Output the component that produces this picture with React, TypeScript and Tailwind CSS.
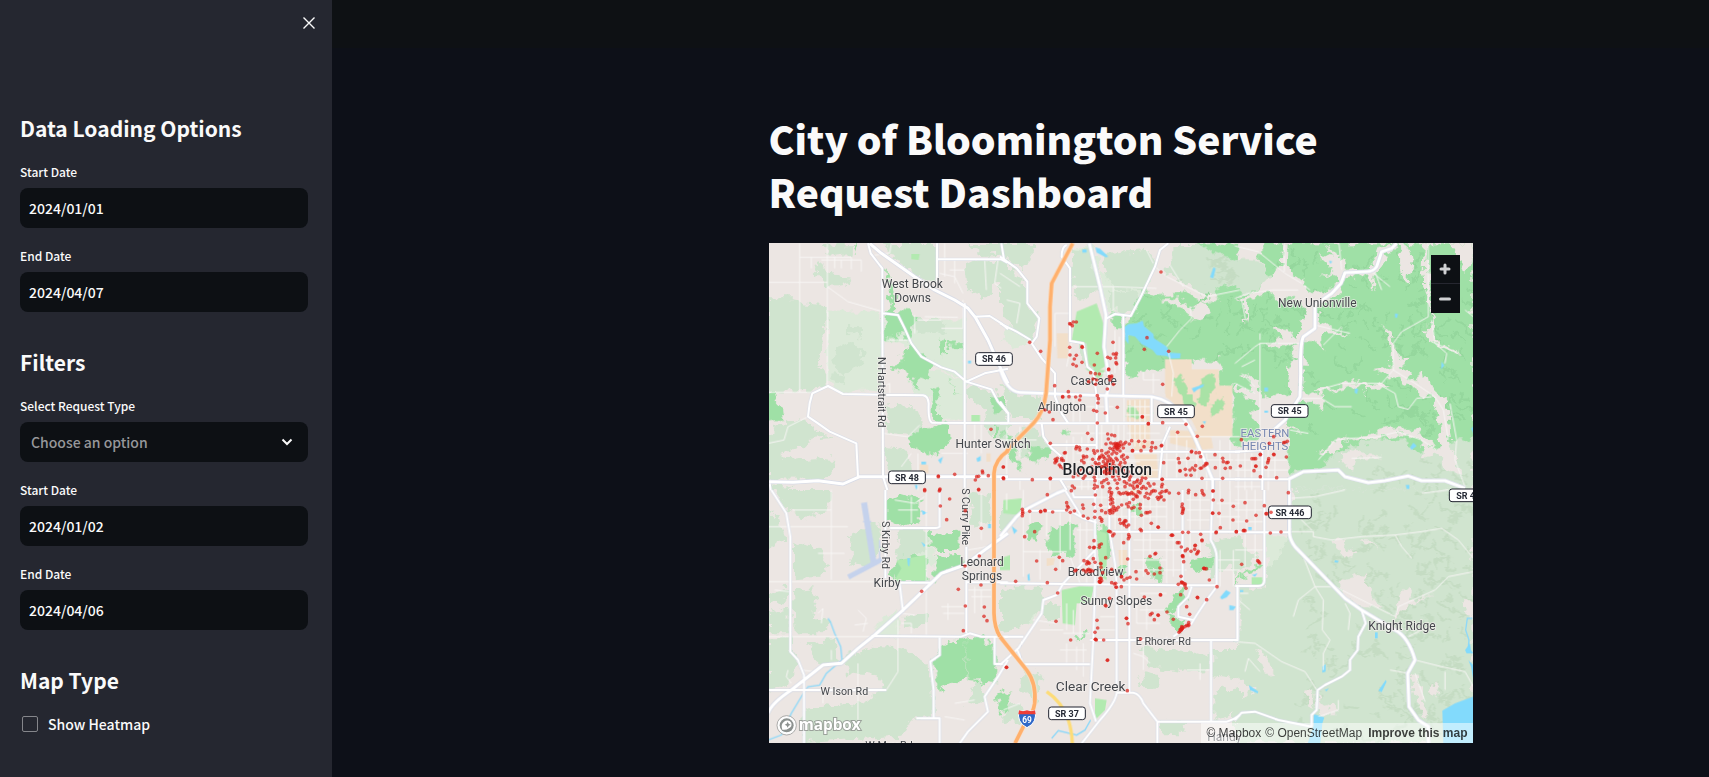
import { useId, useState } from "react";

/* ---------- map data: six tiles, each path is local to its tile ---------- */

type Tile = "a" | "b" | "c" | "d" | "e" | "f";
type Layer = Partial<Record<Tile, string>>;

const ORIGIN: Record<Tile, [number, number]> = {
  a: [-3, -9],
  b: [693, -9],
  c: [1398, -9],
  d: [-3, 741],
  e: [693, 741],
  f: [1398, 741],
};

const TILES = Object.keys(ORIGIN) as Tile[];

const pale: Layer = {
  a: "M180 215H343V450L225 458 180 430ZM345 240H590V420L510 380 450 340 400 300H345ZM420 400 520 390 590 430V540H500L490 470 440 460Z",
  b: "M230 20 280 15 300 130 240 170 215 120ZM300 100 370 90 460 110 400 220 320 215ZM20 260 90 300 60 330 0 300ZM380 490 440 480 450 545 385 545Z",
  c: "M195 410 250 420 250 465 200 470Z",
  d: "M390 180 480 120 500 230 400 200ZM330 390 390 360 390 440 320 440Z",
  e: "M0 300 90 290 120 330 100 400 0 380Z",
  f: "M90 140 160 130 230 230 190 300 140 280 100 220Z",
};

const forest: Layer = {
  a: "M0 172H82L95 190 178 195V262L150 290 160 330 148 380 178 395V435L125 452 60 455 0 452ZM150 15 255 12 250 45 200 50ZM345 12H505V130L460 110 420 85 390 75ZM130 75 160 70 175 100 250 110 235 130 180 140ZM590 75 620 60 720 62V120L680 128 650 180 600 150ZM600 12H720V40L640 45ZM205 320 250 300 290 340 282 372 222 400 192 372ZM240 260 285 262 285 290 240 285ZM0 590 60 540 120 560 130 610 40 640 60 660 140 655 205 660 160 720 0 718ZM20 560 100 535 160 580 200 590 100 600ZM350 500 430 495 452 525 470 560 430 590 360 580ZM600 440 680 450 720 530V600L660 580 650 500 600 480ZM350 620 420 630 430 700 360 690ZM420 230 520 240 540 280 450 285ZM0 730 80 735 60 750H0ZM200 400 230 405 225 435 195 425Z",
  b: "M0 12H100L90 60 60 90 0 40ZM0 60 80 130 85 190 115 240 90 300 40 270 0 200ZM220 20 270 30 300 150 230 190 212 100ZM300 40 440 30 470 70 430 150 340 150ZM520 15H720V150L620 170 560 130 500 100 520 50ZM330 160 390 150 430 170 390 220 330 210ZM0 430 40 460 120 470 130 540 30 540ZM230 240 310 250 320 370 270 390 230 330ZM60 560 110 560 150 640 130 660 60 640 40 600Z",
  c: "M0 55 70 60 110 110 60 150 0 165ZM160 700 240 680 300 640 370 600 500 590 600 625 640 610 715 590V750H160ZM640 505 670 495V580L645 600Z",
  d: "M20 0H190L180 60 110 85 60 60ZM0 60 40 90 55 150 0 180ZM75 160 140 170 180 220 160 260 75 265ZM240 140 330 100 350 180 300 230 250 220ZM20 300 60 290 60 330 0 340V310ZM75 300 130 295 150 330 130 370 190 400 160 430 80 430ZM0 370 65 350 65 430 0 430ZM0 445 66 445V480L90 510 60 590 0 600ZM110 460 200 450 210 520 150 520ZM225 500 310 470 400 475 485 520 495 680 430 690 400 740 110 755 105 660 180 640 280 650 340 600 340 560 240 550ZM620 560 660 610 640 650 600 640ZM600 10 670 20 670 100 610 110ZM410 380 470 370 475 400 420 420ZM400 120 475 110 480 180 380 220Z",
  e: "M0 40 60 30 55 80 0 130ZM0 290 130 290 125 350 60 420 0 430ZM70 530 130 560 110 640 60 600ZM420 470 560 480 630 500V540L540 545 440 530ZM640 480H720V560L640 550ZM430 550 480 560 470 600 420 590ZM640 610 720 590V670L640 690ZM10 660 60 640 70 690 10 700ZM480 690 560 700 540 730 480 730ZM120 350 180 340 180 400 130 390ZM620 150 720 140V210L640 260Z",
  f: "M180 0H715V760H0V640L60 600 0 560V460H10V290H85L100 230 163 150ZM0 150 70 200 0 260Z",
};

const woods: Layer = {
  a: "M345 80 365 115 385 170 380 210 430 215 450 240 420 270 430 300 400 285 350 300 350 222 375 200ZM375 370 415 345 430 308 470 350 500 372 480 410 455 420 440 442 415 400 370 388ZM420 600 455 560 540 555 542 610 500 642 430 625ZM0 455 20 458 30 500 50 535 0 542ZM490 440 515 450 512 552 495 535 500 480ZM672 468 700 470 715 515 675 520ZM510 300 540 300 540 340 512 345ZM545 305 585 305 582 328 548 325ZM490 570 530 550 530 600ZM540 410 575 460 560 445ZM675 555H688V595H675ZM258 10 275 10 265 40Z",
  b: "M430 148 480 165 560 158 610 190 640 180 720 178V630L698 600V440H660V360H575L540 388 495 388 400 425 376 390V250L400 215ZM585 12H720V60L660 40ZM330 215 365 225 365 265 345 265ZM80 630 145 620 150 640 110 670ZM520 400 560 430 580 470 550 500 510 440ZM600 440 640 400 650 450 610 500 580 520ZM10 570 40 600 50 650 70 700 30 650ZM185 560 210 570 205 590 180 580ZM640 150 720 125V180L660 180Z",
  c: "M85 10H715V590L640 612 560 640 500 592 370 608 300 640 240 690 162 700V560L75 600 0 600V170L60 150 110 110 75 60Z",
  d: "M358 30 400 12 460 30 450 90 380 112 358 90ZM380 210 440 195 475 205V272L385 272ZM360 250 385 230 380 272ZM500 200 580 190 590 225 530 240 495 270ZM475 130 570 125 575 180 500 180ZM595 435 640 440 690 500 685 580 600 570ZM490 510 540 460 595 440 597 565 515 605 500 560ZM685 615 720 605V665L690 655Z",
  e: "M85 100 130 110 110 150 80 140ZM140 120 225 100 225 200 150 195 140 150ZM290 100 325 130 330 210 300 200ZM390 45 420 45 420 80 390 75ZM435 200 480 205 480 240 450 240ZM455 240 490 235 485 275 455 270ZM580 215 640 200 645 230 590 250 570 235ZM520 310 550 285 555 320 520 370 500 360ZM505 370 545 385 540 430 515 410ZM0 615 35 600 30 660 0 665ZM230 430 262 430 262 440 230 442ZM350 220 380 225 375 255 350 250Z",
  f: "M0 275 40 240 85 220 70 240 30 255 0 285Z",
};

const parks: Layer = {
  a: "M430 42 455 42 452 60 430 58ZM610 525H636V545H610Z",
  b: "M230 215 290 190 310 250 315 380 290 395 265 370 260 310 215 300ZM255 385 315 390 300 420Z",
  d: "M385 212 472 195V270L380 270 400 235Z",
  e: "M185 300 240 288 282 290 270 340 230 340 225 405 188 400ZM10 30 65 25 60 75 10 70ZM0 205 30 195 30 240 0 240ZM285 625 320 630 315 660 285 690ZM290 120 320 130 320 270 300 260Z",
  f: "M50 262H82V285H50Z",
};

const sand: Layer = {
  a: "M455 672 480 675 482 700 455 695ZM655 640H668V665H655Z",
  b: "M170 280 205 280 205 355 172 355ZM495 358H575V388H657V437H697V590H600L575 540 510 480 495 470ZM380 480 450 475 450 620 405 635 380 540ZM400 640 470 640 475 715 420 712ZM510 570 630 575 640 625 600 630 510 610Z",
  e: "M355 180 382 180 382 225 358 225ZM140 205 165 205 160 225 140 228ZM375 0 420 0 400 15Z",
};

const clearings: Layer = {
  b: "M480 180 530 175 570 205 620 190 640 210 590 240 560 230 540 200ZM395 425 430 390 488 395 490 470H400Z",
  c: "M110 105 140 80 145 10 158 10 155 90 200 120 205 100 205 150 240 165 285 150 310 130 300 100 245 110 300 90 250 45 300 50 265 15 315 40 330 90 410 85 430 25 485 10 460 40 430 90 415 110 420 150 400 110 335 110 320 150 300 170 250 190 245 240 290 265 345 280 270 280 255 300 275 335 230 300 210 300 205 400 200 450 270 470 280 490 260 505 240 480 195 480 160 540 160 560 210 580 165 570V620H75V540L40 520 75 500 35 470 0 440V430L60 460 20 400 70 430 75 470 160 460 165 400 155 380 185 360 160 340 185 310 120 320 90 305 145 300 110 260 150 270 190 300 210 210 190 180 140 180 105 160 40 180 35 250 25 180 0 180 60 155ZM490 10 520 20 530 60 515 140 500 80ZM570 10 583 10 575 80 590 200 600 300 660 330 680 345 620 320 580 300 575 260 590 240 565 100ZM465 310 435 250 475 290 480 340 520 360 500 380 540 420 570 395 575 430 630 480 640 520 650 620 680 700 640 690 600 640 560 660 570 625 540 590 480 580 430 600 330 600 450 570 540 570 620 630 610 520 590 480 550 450 480 410 410 395 470 380ZM245 450 310 445 330 425 440 430 465 445 390 450 385 470 380 435 320 450 250 465ZM320 640 365 620 380 640 440 650 365 660 360 690 310 660ZM640 10H715V60L690 100 670 50ZM255 640 300 600 340 590 300 640Z",
  f: "M285 155 320 145 330 170 360 185 355 205 320 190ZM310 275 390 250 395 290 410 310 440 360 380 350 340 330ZM490 320 520 290 540 330 600 310 520 350 480 385ZM590 570 610 590 600 615 585 600ZM370 150 400 150 430 175 390 165ZM240 620 300 660 310 670 260 675ZM530 550 545 555 560 620 580 680 560 690 540 600ZM680 335 715 330V380L690 370ZM60 480 100 500 120 560 80 540ZM210 600 230 590 240 660 225 650Z",
};

const water: Layer = {
  a: "M510 660 525 650 518 672ZM625 655 638 648 638 662 628 666ZM600 362H609V370H600ZM440 735H453L445 750ZM460 665H474V673H460Z",
  b: "M372 262 385 252 410 250 428 242 432 258 460 282 462 295 500 320 510 338 542 340 540 355 512 356 500 348 470 345 458 330 425 312 405 290 385 285 386 312 376 300ZM286 22 300 26 325 50 318 52 290 38ZM247 28H260V38H247ZM640 82 647 85 640 115 630 112ZM575 445 612 432 610 440 590 450 582 458ZM607 545 618 543 615 552Z",
  c: "M480 220 489 222 486 234 480 232ZM620 365 628 376 618 388ZM360 445 370 447 366 462 359 458ZM525 622 535 608 545 618 530 630ZM88 442H99V454H88ZM282 62 292 64 286 72ZM88 512H99V518H88ZM512 735H523V747H515ZM708 565 715 560V580Z",
  d: "M418 205 426 205 424 230 420 225ZM460 60 478 68 465 75ZM460 155 473 165 468 172ZM660 102H669V115H660Z",
  e: "M35 108 52 122 42 132ZM660 322 678 300 692 308 680 322 665 328ZM688 345 708 350 700 360H688ZM82 255 88 250 90 272 84 272Z",
  f: "M622 662 660 640 715 620V760H625ZM236 672 268 682 262 700 256 760H218L235 710ZM300 210 312 213 308 218 298 217ZM262 530 272 522V545L262 548ZM430 602 452 570 455 575 440 606ZM42 585 70 605 68 610 45 600ZM420 427H428V445H420ZM690 480 705 460 708 480 715 490 695 490ZM700 510 715 525V570L708 530ZM40 112H50V120H40ZM50 255 68 250 60 260ZM15 300H25V306H15ZM268 600 282 595 275 603Z",
};

const streams: Layer = {
  d: "M180 385 187 395 200 430 218 470 222 510 175 550 155 585 120 590 100 620 70 670 40 735 0 750",
  e: "M155 745 175 722 230 735 255 720 272 690",
  f: "M700 470 702 450 692 420 697 385 712 385",
};

const lanes: Layer = {
  a: "M0 127H178M95 10V455M178 10V435M178 140 240 185 345 215M0 457H130M95 52H250M130 52V85M160 60H280V95M200 85V50M220 85V60M250 88V52M120 530 60 560 48 600 0 610M345 440 365 430V460M450 240H520M440 225V280M515 100 560 110 585 160M530 10V110M560 60V130M545 90H590M470 230 570 232M520 265H585V180M650 60 655 150M690 60 680 130 700 145M345 580 420 590 455 555M450 640V750M520 640H600M620 550V600M640 550V640M355 300H430M180 215V300M370 10 365 40 320 45M430 640 400 680",
  b: "M215 140H340V230M340 140 470 145M165 220H210M165 220V320M215 305 200 380M0 100 60 140M20 180 60 190 50 250M440 30 460 70M510 75 550 140M465 80 500 110 620 170 720 150M500 320 540 270 575 235 570 200M505 335 520 400 515 470M390 480V620M405 480V620M420 480V620M435 480V620M380 500H455M380 525H455M380 580H480M380 600H490M380 660H560M500 560V720M530 575V720M560 600V720M590 610V720M620 640V750M660 600V750M690 600V750M500 590H720M500 660H700M200 580H330M200 600V700M220 590V720M245 590V750M265 550V750M305 550V750M0 600H110M20 560V720M60 560V650M340 550V750M355 550V750M372 470V720M230 640H480M230 665H420M220 690H480M200 740H500M150 720V750M60 720V750M220 470V550M240 470V550M255 500H340M300 400H340M345 270V400M358 290V390M430 395V420H480M460 400V460",
  c: "M0 18 70 35 150 100 200 130M148 10V95M0 175 40 160 110 150H190M312 10 320 90M410 95 465 140M420 95 440 150M0 370 60 320 75 310H195M75 280V300M240 255 345 280M580 10V230L500 275 475 310V390L440 430H320L250 450M475 390 540 430 600 470 625 510 640 600M645 490 665 600 660 660 690 740M250 660 300 600 340 595 420 592 490 575 560 600 605 630M590 240 600 310 635 340 630 370M195 475H260L300 500H350M75 310V620M690 210 715 230M430 432 480 460 490 500 520 508 545 475 590 470M590 305 670 340M350 655 440 652M205 135 225 150M20 180 32 240M0 430 60 460M60 440 20 400M165 570 220 580M10 630V750M30 630V750M50 640V750M100 620V750M120 640V720M0 660H160M0 690H160M0 740H80M265 315 320 260M20 380 60 360",
  d: "M0 275H490M190 0V270M0 110H240M475 0V440M0 440H320M150 190H230M75 60H190M60 540 55 560 70 580M270 520V690M355 600 390 545V390M150 370 165 355 160 400M270 360 295 385 285 425M260 405 300 400M165 600V640M400 400H430V430M520 350H590M525 370H590M540 340V390M600 300H670M610 320H670M620 290V370M640 300V360M600 180 660 170M560 640 620 630M20 300 65 305M100 540 140 545M380 30 440 40 470 20M390 60H450M430 20V100M190 510V480M400 370 440 375M530 680 590 690M600 10V170M640 10V150",
  e: "M20 10V60M70 0V260M70 185H200M90 60V100M140 60V140M180 60V240M210 60V180M230 120H285M240 100V240M260 90V280M305 0V120M345 0V120M365 0V280M405 0V120M430 0V260M450 0V200M470 0V120M500 0V280M520 30V260M570 0V200M600 0V200M220 22H480M290 50H500M290 80H500M400 150H550M400 180H540M400 210H500M400 240H560M210 200 240 280M200 340V420M220 360V430M190 430H270M240 340V450M290 340H350M300 380H350M300 420H350M410 330V400H480M420 360H500M440 320V420M500 460V440M400 490 430 500 450 520M430 470V540M560 540H630M600 520V570M700 180V290M660 180V290M650 210H720M650 240H720M560 30H630M560 60H630M560 90H630M660 0V120M690 0V125M650 40H720M650 80H720M100 390 170 400M120 420H190M200 460V520M230 470V540M250 460V560M10 660 60 640M180 480H260M420 310H500M120 180V270",
  f: "M165 125H235V140L290 150 380 140 480 135 560 125 620 115 670 150 715 205M480 135 500 170 530 205M205 200 240 290 190 330 175 380M240 290 265 330 262 420 285 450 265 490V540M240 290H300L400 340 480 380 490 350 600 300 640 260 715 245M0 455 60 460 140 515 210 545 245 600M540 510 620 530 690 545 715 590M520 440 560 420 600 400M540 550 570 635M630 545V600M330 340 345 370 340 420M40 505 30 545M40 505 75 545M10 0V125M35 0V125M60 0V125M0 30H85M0 60H85M0 95H85M30 130V230M60 130V210M0 180H85M10 330 45 360M15 310H40M310 630V660L250 680M465 540 520 550M165 25 240 20 330 0M560 10 640 0M190 80 230 120",
};

const roads: Layer = {
  a: "M300 10 308 40 337 78 343 85V220L345 710M507 10V135M507 58H700L718 68M700 10 708 58M590 190V750M345 220 390 225 410 265 430 310 460 350 520 382 560 395 595 425 650 400 720 386M595 425 670 448 690 485 720 520M620 230 665 228 700 250 720 268M270 710 265 610 185 575 150 550 120 530 125 490 133 460 180 438 225 462 345 464 465 466Q480 468 482 490 480 545 492 548L720 550M5 730 8 750M345 710 358 750",
  b: "M0 50 50 85 82 125V190L118 235 110 290 95 310 125 355 165 400V470L185 520 205 550M0 250 50 275 92 300M505 10 480 30 465 80 420 175 392 228 370 225 345 222 320 235M370 225V470M200 15Q185 20 185 50L210 85V303L250 310 262 380 280 395 290 470V750M0 550H560M0 718H720M400 635H720M125 550 130 590 155 625 185 650 190 690M0 485 25 520V550M455 470V550M510 560 488 610 478 718M150 615H290M180 718 200 750",
  c: "M0 635 80 630M82 630V750M163 718V750M0 718H160",
  d: "M10 0 55 70 67 140V485L90 510 108 555V760M352 0V265M515 0V110Q510 115 500 114H365M395 280 405 365M395 278H490M310 438 580 440 605 430 640 440H720M595 170V430M515 440V495L487 515 497 600V685M445 685H515V760M0 600H355M595 277H720M680 440V522H705M720 510 690 560 650 620 660 665 600 725 575 760",
  e: "M70 62H210L250 85 290 98M195 0 245 80M215 0 222 22H290M0 280 530 286H650M285 0V280L280 450 270 640 288 695M328 0V120L345 220 350 285V610Q345 640 300 690L245 760M388 0V605M328 125H720M548 0V290M638 0 632 150Q650 180 650 200V290L620 330 590 375 575 400 520 440M270 450H712V290M350 608H400Q420 612 430 640L472 695V760M472 695H680Q700 690 720 675M633 452V695M285 180 190 280 170 315 130 330 125 370 55 475 0 525M0 440H70M50 475 70 523H270M575 290 565 320 535 350V380L580 390",
  f: "M0 127H165M88 0V270Q88 288 70 288H0M8 288V450H0M380 360 392 400 370 440 368 480 345 510V540L320 560 270 585 248 600 245 660 230 675V710M0 690 20 668 60 665 130 690 230 710",
};

const arterials: Layer = {
  a: "M305 10 340 40 440 110 500 150 560 180 600 205 622 232 660 300 700 390 720 430M0 725 75 727 150 722 225 732 275 710H720",
  b: "M0 385Q20 455 60 457L300 466 455 470Q510 480 540 520 570 555 600 630L638 720V750M268 10 300 140 318 225 312 320 325 400 330 430 318 470 322 550",
  c: "M485 10 470 25 440 35 425 80Q415 95 395 95L330 98 318 130 290 160 240 195V265L205 290Q195 310 197 400L195 470 150 540 110 575M160 718 205 695 310 690 330 710 400 728 450 722 520 708 560 722 630 722 690 745",
  d: "M0 670Q10 640 70 600L165 525 220 520 270 475 320 435 400 365 520 250 590 225 650 180 720 130",
  e: "M0 140 50 80 70 62 170 10 195 0",
  f: "M163 0V130Q165 150 180 170L330 325 380 360 480 420Q520 440 540 510L518 550 522 650 550 690 580 710V760",
};

const interstate: Layer = {
  a: "M720 632Q680 660 678 700V752",
  b: "M218 10 155 130 150 200V300L138 460Q130 520 100 550L30 620 20 636",
  d: "M678 0V370Q679 412 696 440",
  e: "M0 440Q40 490 80 540 110 580 104 640 100 670 75 700L45 760",
};

const requests: Layer = {
  a: "669,568 511,710 511,708 560,703 643,693 644,698 661,707 626,710 632,709 622,720 706,681 706,714 707,716 516,747 632,748 470,749",
  b: "483,96 441,293 433,328 506,334 212,252 220,246 229,246 217,257 209,251 89,307 122,334 209,322 247,322 246,320 210,345 229,346 223,357 219,373 229,378 246,367 292,340 339,307 283,375 349,340 348,345 340,342 323,352 331,355 347,354 348,368 350,372 326,387 326,389 272,398 286,401 298,402 279,417 266,425 328,410 335,408 334,412 330,420 287,433 290,420 340,433 322,447 164,437 188,471 188,470 205,455 207,470 227,471 241,468 239,480 292,467 295,476 294,489 352,502 281,511 290,514 316,519 292,549 148,516 135,510 159,539 427,530 427,531 445,551 445,551 488,433 488,548 558,553 533,577 607,559 592,589 151,610 263,580 276,598 323,582 335,585 344,587 325,597 318,612 332,609 340,612 348,616 355,610 362,606 350,620 343,622 357,622 350,612 347,619 356,616 353,624 365,615 370,624 352,628 338,628 330,625 360,633 377,607 388,612 395,602 416,604 434,604 457,608 455,622 453,632 467,623 485,616 432,620 397,632 398,632 423,632 230,620 238,622 228,626 240,630 262,627 250,648 251,653 196,638 193,639 166,658 170,663 165,668 172,655 185,660 190,662 178,675 182,680 190,685 168,663 185,655 281,632 284,640 292,633 305,632 306,645 300,652 296,657 299,651 318,640 325,648 330,655 336,642 335,660 340,665 348,655 352,660 310,665 316,672 322,668 325,678 333,675 310,680 318,686 328,688 336,684 344,690 350,696 322,694 314,698 330,700 326,672 320,681 331,693 316,691 340,708 338,710 365,650 370,645 372,658 375,668 362,668 358,675 382,652 366,682 370,690 350,640 342,635 325,636 286,668 290,674 275,680 280,690 270,700 285,700 252,668 245,662 240,690 248,685 255,708 225,700 220,710 235,705 283,712 285,722 284,735 283,745 292,740 305,728 312,722 308,740 320,718 325,730 330,745 345,720 352,730 358,718 352,745 373,725 380,730 388,720 390,712 380,708 395,705 402,728 398,738 410,725 412,738 402,745 420,730 427,714 424,722 430,740 437,715 438,745 445,730 450,738 462,732 413,720 360,690 372,700 355,708 384,695 151,715 151,716 97,719 10,681 10,714 217,738 223,744 250,715 486,718 487,718 487,733 540,692 540,693 556,688 558,705 535,656 538,668 564,655 574,636 575,634 588,638 598,638 602,650 587,677 584,690 573,706 570,690 577,684 601,685 606,715 618,670 621,671 612,678 605,684 617,675 645,644 646,683 668,715 670,665 680,668 684,667 691,683 676,685 668,655 484,618 491,668 412,740 425,745 390,735 375,740 485,740 314,655 322,660 310,650 328,665 338,672 344,678 330,692 324,684 352,614 346,610 358,616 349,624 372,612 278,658 260,650",
  c: "19,599 116,590 103,610 150,607 157,604 76,643 76,644 116,643 117,644 154,651 51,656 57,656 62,656 101,656 100,662 98,668 16,678 62,678 63,679 93,682 57,692 76,710 125,713 146,608",
  d: "514,3 515,0 470,2 545,27 517,48 536,89 592,62 632,0 640,115 634,198 591,228 639,285 571,298 461,304 592,348 649,351 648,379 657,392 586,422 715,532",
  e: "214,2 142,14 286,15 200,38 202,48 205,52 200,60 211,67 223,63 248,45 250,55 250,78 264,85 67,58 68,65 68,70 67,77 89,64 122,65 122,64 134,61 136,62 158,66 281,43 302,46 305,62 317,68 284,82 285,64 300,83 305,88 305,94 335,8 333,14 332,22 337,28 331,30 338,38 332,42 340,50 336,58 346,55 331,62 343,62 350,60 338,68 330,70 328,5 328,62 355,52 365,45 357,8 362,12 370,10 378,8 385,10 390,12 383,13 395,8 400,12 408,15 412,20 400,28 388,38 380,42 385,50 395,55 402,52 408,20 415,5 420,8 421,44 420,55 440,10 435,20 445,25 450,12 455,5 460,2 466,3 472,22 475,28 480,22 484,20 492,30 480,10 486,5 496,4 508,9 500,2 438,68 443,68 450,66 424,76 536,10 565,8 547,42 546,50 550,56 548,65 549,60 547,70 566,1 587,14 608,10 612,15 606,2 638,3 640,3 640,30 666,31 657,70 638,70 638,69 700,49 699,90 709,125 359,89 375,92 372,96 378,93 370,100 373,105 362,100 386,105 380,110 454,100 474,111 475,112 421,118 424,122 648,128 649,126 661,113 328,124 326,124 332,126 342,132 338,137 386,134 388,140 385,146 371,158 514,136 516,135 518,136 548,127 565,127 602,133 606,150 606,152 585,167 586,166 584,178 573,184 562,177 556,182 595,184 593,188 590,192 544,171 532,158 537,158 548,197 547,198 549,200 551,215 465,192 467,190 450,199 104,125 74,140 282,152 283,172 281,173 269,172 298,165 298,172 304,162 317,203 178,202 188,212 110,213 167,238 173,309 47,274 142,278 280,206 285,217 252,212 262,215 268,220 260,222 265,218 303,222 302,220 303,232 266,238 270,245 262,240 258,245 250,240 225,243 228,240 272,240 278,243 308,248 335,238 300,265 303,265 298,275 300,277 301,276 299,274 305,272 335,278 347,280 343,282 348,291 349,292 364,290 364,260 365,260 372,270 381,265 390,262 383,207 408,245 410,267 438,242 444,250 463,252 480,234 480,248 433,321 481,314 482,315 329,325 316,346 318,348 379,385 380,385 384,401 168,394 291,391 293,414 285,427 286,448 287,448 289,450 311,450 212,450 323,510 322,511 20,532 422,447 382,602 451,374 456,370 474,375 475,376 463,389 501,366 520,388 569,373 560,350 592,322 593,323 620,329 651,290 628,270 612,235 614,236 619,236 611,235 543,259 545,276 544,278 548,278 552,281 556,282 555,287 535,283 558,295 542,314 566,398 567,405 560,406 564,407 555,410 548,415 545,410 541,418 544,420 540,424 537,427 548,412 545,415 543,419 546,417",
  f: "160,8 30,38 88,47 63,76 93,71 95,71 108,67 35,93 4,125 27,121 25,122 30,122 106,129 138,126 20,223 68,212 74,219 71,215",
};

const toPoints = (list = "") =>
  list.split(" ").filter(Boolean).map((pair) => pair.split(",").map(Number));

/* Contour strokes of the hills, spread evenly with a fixed seed. */
function contours(x0: number, y0: number, x1: number, y1: number, count: number) {
  let seed = 7;
  const next = () => (seed = (seed * 16807) % 2147483647) / 2147483647;
  let d = "";
  for (let i = 0; i < count; i++) {
    const x = x0 + next() * (x1 - x0);
    const y = y0 + next() * (y1 - y0);
    const dx = (next() - 0.45) * 90;
    const dy = 6 + next() * 30;
    d += `M${x.toFixed(0)} ${y.toFixed(0)}q${(dx * 0.2).toFixed(0)} ${(dy * 0.7).toFixed(0)} ${dx.toFixed(0)} ${dy.toFixed(0)}`;
  }
  return d;
}

const hillsNorth = contours(1520, 20, 2100, 560, 150) + contours(1090, 150, 1540, 330, 45);
const hillsSouth =
  contours(1600, 770, 2100, 1480, 200) + contours(1640, 640, 2100, 760, 24) + contours(1240, 10, 1400, 110, 14);

function Shapes({ layer, className, filter }: { layer: Layer; className: string; filter?: string }) {
  return (
    <g filter={filter} className={className}>
      {TILES.map((tile) =>
        layer[tile] ? <path key={tile} d={layer[tile]} transform={`translate(${ORIGIN[tile].join(" ")})`} /> : null,
      )}
    </g>
  );
}

function Label({
  x,
  y,
  children,
  size = "town",
  turn = false,
}: {
  x: number;
  y: number;
  children: string;
  size?: "town" | "large" | "city" | "road" | "area";
  turn?: boolean;
}) {
  const styles = {
    town: "fill-[#44474c] text-[36px]",
    large: "fill-[#44474c] text-[41px]",
    city: "fill-[#1d2025] text-[47px] font-medium",
    road: "fill-[#44474c] text-[32px]",
    area: "fill-[#7787b0] text-[34px]",
  };
  return (
    <text
      x={x}
      y={y}
      dy="0.36em"
      textAnchor="middle"
      transform={turn ? `rotate(90 ${x} ${y})` : undefined}
      className={`stroke-[#f3efec]/80 stroke-[5px] [paint-order:stroke] ${styles[size]}`}
    >
      {children}
    </text>
  );
}

function RoadShield({ x, y, width = 110, children }: { x: number; y: number; width?: number; children: string }) {
  return (
    <g>
      <rect x={x - width / 2} y={y - 19} width={width} height={38} rx={8} className="fill-white stroke-[#20232f] stroke-[3px]" />
      <text x={x} y={y} dy="0.36em" textAnchor="middle" className="fill-[#262a35] text-[27px] font-bold">
        {children}
      </text>
    </g>
  );
}

function CityMap() {
  const rough = useId();
  return (
    <svg
      viewBox="0 0 2112 1500"
      preserveAspectRatio="xMidYMid slice"
      role="img"
      aria-label="Map of service requests"
      className="block h-full w-full bg-[#ece6e3] font-[Roboto,sans-serif]"
    >
      <defs>
        <filter id={rough} x="0" y="0" width="2112" height="1500" filterUnits="userSpaceOnUse">
          <feTurbulence type="fractalNoise" baseFrequency="0.035" numOctaves="3" seed="4" result="noise" />
          <feDisplacementMap in="SourceGraphic" in2="noise" scale="42" xChannelSelector="R" yChannelSelector="G" />
        </filter>
      </defs>

      <Shapes layer={pale} className="fill-[#dcead9]" filter={`url(#${rough})`} />
      <Shapes layer={forest} className="fill-[#d0e4cf]" filter={`url(#${rough})`} />
      <path d={hillsSouth} className="fill-none stroke-[#c5dcc3] stroke-[8px]" strokeLinecap="round" filter={`url(#${rough})`} />
      <Shapes layer={woods} className="fill-[#9fe0a6]" filter={`url(#${rough})`} />
      <path d={hillsNorth} className="fill-none stroke-[#95d79d] stroke-[7px]" strokeLinecap="round" filter={`url(#${rough})`} />
      <Shapes layer={parks} className="fill-[#b2eab0]" />
      <Shapes layer={sand} className="fill-[#f2dfc9]" />
      <g className="fill-[#a9e2a6]" filter={`url(#${rough})`}>
        <path d="M1215 390l30 20 15 40 25 30-30 15-20-40-20-20zM1300 400l30-10 10 50-30 50-20-10zM1320 490l40-30 10 20-40 40zM1080 490h25v35h-25z" />
      </g>
      <Shapes layer={clearings} className="fill-[#ece6e3]" filter={`url(#${rough})`} />
      <Shapes layer={streams} className="fill-none stroke-[#8ed8f8] stroke-[4px]" />
      <Shapes layer={water} className="fill-[#82dafc]" />
      <g transform="translate(-3 741)" className="fill-none stroke-[#c5d2ec]">
        <path d="M288 38 318 225" strokeWidth="18" />
        <path d="M241 261 342 208" strokeWidth="15" />
        <path d="M285 95h25M300 150l15-2M335 150v60h-20" strokeWidth="4" />
      </g>

      <g strokeLinejoin="round">
        <Shapes layer={lanes} className="fill-none stroke-[#f8f6f5] stroke-[3px]" />
        <Shapes layer={roads} className="fill-none stroke-[#d9dde8] stroke-[9px]" />
        <Shapes layer={arterials} className="fill-none stroke-[#d6dae6] stroke-[13px]" />
        <Shapes layer={roads} className="fill-none stroke-white stroke-[6px]" />
        <Shapes layer={arterials} className="fill-none stroke-white stroke-[9px]" />
        <path d="M140 605Q185 635 205 690 215 720 217 760" transform="translate(693 741)" className="fill-none stroke-[#fddc78] stroke-[10px]" />
        <Shapes layer={interstate} className="fill-none stroke-[#f7e3d2] stroke-[15px]" />
        <Shapes layer={interstate} className="fill-none stroke-[#ffb06c] stroke-[11px]" />
      </g>

      <Label x={430} y={123}>West Brook</Label>
      <Label x={431} y={164}>Downs</Label>
      <Label x={340} y={448} size="road" turn>N Hartstrait Rd</Label>
      <Label x={672} y={603}>Hunter Switch</Label>
      <Label x={974} y={413}>Cascade</Label>
      <Label x={879} y={491}>Arlington</Label>
      <Label x={1645} y={180}>New Unionville</Label>
      <Label x={1488} y={571} size="area">EASTERN</Label>
      <Label x={1488} y={610} size="area">HEIGHTS</Label>
      <Label x={354} y={1020}>Kirby</Label>
      <Label x={349} y={906} size="road" turn>S Kirby Rd</Label>
      <Label x={590} y={821} size="road" turn>S Curry Pike</Label>
      <Label x={639} y={957}>Leonard</Label>
      <Label x={639} y={997}>Springs</Label>
      <Label x={226} y={1345} size="road">W Ison Rd</Label>
      <Label x={360} y={1507} size="road">W May Rd</Label>
      <Label x={980} y={986}>Broadview</Label>
      <Label x={1042} y={1074}>Sunny Slopes</Label>
      <Label x={1183} y={1193} size="road">E Rhorer Rd</Label>
      <Label x={965} y={1330} size="large">Clear Creek</Label>
      <Label x={1899} y={1149}>Knight Ridge</Label>
      <Label x={1366} y={1482}>Handy</Label>

      <RoadShield x={675} y={348}>SR 46</RoadShield>
      <RoadShield x={414} y={703}>SR 48</RoadShield>
      <RoadShield x={1221} y={505}>SR 45</RoadShield>
      <RoadShield x={1562} y={504}>SR 45</RoadShield>
      <RoadShield x={1563} y={808} width={128}>SR 446</RoadShield>
      <RoadShield x={894} y={1411}>SR 37</RoadShield>
      <RoadShield x={2105} y={757} width={128}>SR 446</RoadShield>

      <g transform="translate(774 1427)">
        <path d="M-24-25Q-12-20 0-25 12-20 24-25 32 12 0 27-32 12-24-25Z" className="fill-[#2f68c8] stroke-white stroke-[3px]" />
        <path d="M-24-25Q-12-20 0-25 12-20 24-25L26-13H-26Z" className="fill-[#ee3e35]" />
        <text y={4} dy="0.36em" textAnchor="middle" className="fill-white text-[25px] font-bold">69</text>
      </g>

      <g className="fill-[#dc1f18]/70">
        {TILES.flatMap((tile) =>
          toPoints(requests[tile]).map(([x, y], i) => (
            <circle key={`${tile}${i}`} cx={x + ORIGIN[tile][0]} cy={y + ORIGIN[tile][1]} r={5.5} />
          )),
        )}
      </g>

      <Label x={1015} y={679} size="city">Bloomington</Label>
      <g className="fill-[#dc1f18]/70">
        {[[990, 662], [998, 671], [1008, 668], [1014, 680], [1020, 690], [1006, 686], [1028, 676], [1012, 692]].map(([cx, cy]) => (
          <circle key={`${cx}-${cy}`} cx={cx} cy={cy} r={5.5} />
        ))}
      </g>

      <g transform="translate(53 1447)">
        <circle r={29} className="fill-white/90 stroke-[#8d8f8d]/70 stroke-[3px]" />
        <circle r={21} className="fill-[#8c918f]" />
        <path d="M-13 13Q-19-3-8-11A14 14 0 0 1 14-7 14 14 0 0 1 7 9Q-1 15-13 13Z" className="fill-white" />
        <path d="M3-11 6-5 12-2 6 1 3 7 0 1-6-2 0-5Z" className="fill-[#8c918f]" />
      </g>
      <text
        x={89}
        y={1462}
        className="fill-white stroke-[#8d918d]/80 stroke-[6px] font-['Open_Sans',sans-serif] text-[46px] font-bold [paint-order:stroke]"
      >
        mapbox
      </text>
    </svg>
  );
}

/* ------------------------------ page parts ------------------------------ */

function DateField({ label, initial }: { label: string; initial: string }) {
  const id = useId();
  const [value, setValue] = useState(initial);
  return (
    <div className="mb-4">
      <label htmlFor={id} className="mb-1 block text-[12px] leading-6 font-medium">
        {label}
      </label>
      <input
        id={id}
        value={value}
        onChange={(event) => setValue(event.target.value)}
        className="block h-10 w-full rounded-lg bg-[#0d1014] px-[9px] text-[14px] font-medium outline-none focus:ring-1 focus:ring-[#ff4b4b]"
      />
    </div>
  );
}

function SectionTitle({ children }: { children: string }) {
  return <h2 className="mb-4 text-[21px] leading-8 font-bold">{children}</h2>;
}

function Sidebar() {
  return (
    <aside className="w-[332px] shrink-0 bg-[#252730] pr-6 pl-5">
      <div className="-mr-2 flex h-[112px] justify-end pt-4">
        <button type="button" aria-label="Close sidebar" className="h-[14px]">
          <svg viewBox="0 0 14 14" className="size-[14px] fill-none stroke-current" strokeWidth="1.4">
            <path d="M1.500 1.500 12.500 12.500M12.500 1.500 1.500 12.500" />
          </svg>
        </button>
      </div>

      <section>
        <SectionTitle>Data Loading Options</SectionTitle>
        <DateField label="Start Date" initial="2024/01/01" />
        <DateField label="End Date" initial="2024/04/07" />
      </section>

      <section className="pt-[18px]">
        <SectionTitle>Filters</SectionTitle>
        <div className="mb-4">
          <label htmlFor="request-type" className="mb-1 block text-[12px] leading-6 font-medium">
            Select Request Type
          </label>
          <div className="relative">
            <select
              id="request-type"
              defaultValue=""
              className="block h-10 w-full appearance-none rounded-lg bg-[#0d1014] px-[11px] text-[14px] font-medium text-[#96979a] outline-none"
            >
              <option value="">Choose an option</option>
            </select>
            <svg
              viewBox="0 0 12 8"
              className="pointer-events-none absolute top-4 right-[15px] h-2 w-3 fill-none stroke-current"
              strokeWidth="2"
            >
              <path d="M1.500 1.500 6 6 10.500 1.500" />
            </svg>
          </div>
        </div>
        <DateField label="Start Date" initial="2024/01/02" />
        <DateField label="End Date" initial="2024/04/06" />
      </section>

      <section className="pt-[18px]">
        <SectionTitle>Map Type</SectionTitle>
        <label className="flex items-center gap-[10px] pl-[2px] text-[14px] leading-6 font-medium">
          <input type="checkbox" className="size-4 appearance-none rounded-[2px] border border-[#85868b] checked:bg-[#ff4b4b]" />
          Show Heatmap
        </label>
      </section>
    </aside>
  );
}

export default function App() {
  return (
    <div className="flex min-h-screen bg-[#0d1018] font-['Noto_Sans_CJK_SC',sans-serif] text-[#fafafa]">
      <Sidebar />
      <div className="flex-1">
        <header className="h-12 bg-[#0e1114]" />
        <main className="pt-16 pb-8 pl-[200px]">
          <div className="mx-auto max-w-[704px]">
            <h1 className="text-[39px] leading-[53px] font-black">City of Bloomington Service Request Dashboard</h1>
            <div className="relative mt-[25px] h-[500px] overflow-hidden">
              <CityMap />
              <div className="absolute top-3 right-[13px] flex w-[29px] flex-col divide-y divide-[#262730] bg-[#0d1014] text-[#d0d1d3]">
                <button type="button" aria-label="Zoom in" className="flex h-[29px] items-center justify-center">
                  <svg viewBox="0 0 12 12" className="size-3 fill-none stroke-current" strokeWidth="3" strokeLinecap="round">
                    <path d="M6 2V10M2 6H10" />
                  </svg>
                </button>
                <button type="button" aria-label="Zoom out" className="flex h-[29px] items-center justify-center">
                  <svg viewBox="0 0 12 12" className="size-3 fill-none stroke-current" strokeWidth="3" strokeLinecap="round">
                    <path d="M1.500 6H10.500" />
                  </svg>
                </button>
              </div>
              <div className="absolute right-0 bottom-0 flex gap-1 bg-white/50 px-[5px] font-['Liberation_Sans',sans-serif] text-[12px] leading-5 text-black/75">
                <a href="#mapbox">© Mapbox</a>
                <a href="#openstreetmap">© OpenStreetMap</a>
                <a href="#improve" className="ml-[2px] font-bold">
                  Improve this map
                </a>
              </div>
            </div>
          </div>
        </main>
      </div>
    </div>
  );
}
